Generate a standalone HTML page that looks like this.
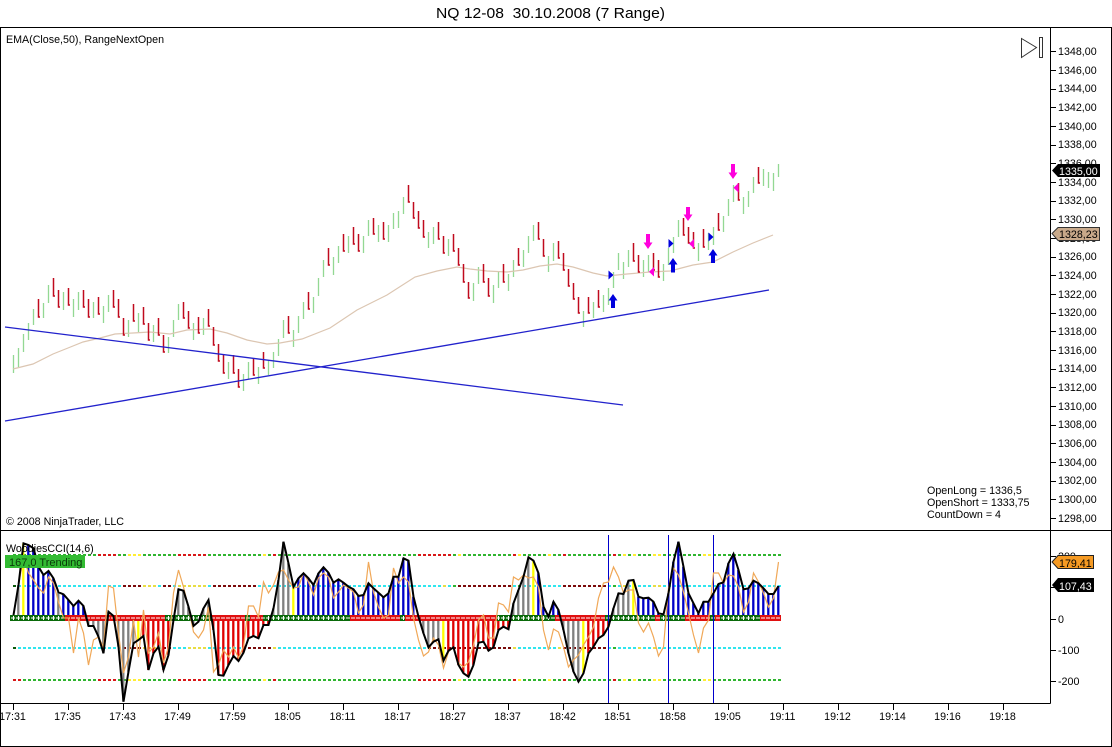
<!DOCTYPE html>
<html>
<head>
<meta charset="utf-8">
<style>
html,body{margin:0;padding:0;background:#fff;width:1112px;height:747px;overflow:hidden}
svg{display:block}
text{font-family:"Liberation Sans",Arial,sans-serif;font-size:10.7px;fill:#000}
</style>
</head>
<body>
<svg width="1112" height="747" viewBox="0 0 1112 747" xmlns="http://www.w3.org/2000/svg">
<rect width="1112" height="747" fill="#fff"/>

<!-- title -->
<text x="436" y="18" textLength="229" lengthAdjust="spacingAndGlyphs" style="font-size:15px;white-space:pre" xml:space="preserve">NQ 12-08  30.10.2008 (7 Range)</text>

<!-- price bars green -->
<path fill="none" stroke="#93d893" stroke-width="1.300" d="M13.500 355V373M18.500 348V367M23.500 334V352M28.500 323V340M33.500 309V325M43.500 303V318M48.500 285V303M63.500 292V310M73.500 299V317M78.500 292V310M93.500 302V318M103.500 306V323M108.500 295V312M128.500 320V337M138.500 313V332M153.500 325V342M168.500 337V353M173.500 320V337M178.500 304V320M193.500 323V340M203.500 318V335M228.500 362V379M243.500 374V391M248.500 362V379M258.500 367V384M268.500 360V375M273.500 352V368M278.500 339V356M283.500 320V338M293.500 330V347M298.500 316V333M303.500 302V319M313.500 297V313M318.500 278V296M323.500 260V277M333.500 257V275M338.500 246V263M348.500 236V253M363.500 236V253M368.500 220V236M378.500 225V242M388.500 225V242M393.500 213V229M398.500 211V228M403.500 197V214M428.500 232V248M433.500 227V244M448.500 239V256M473.500 283V301M478.500 267V284M493.500 285V303M498.500 272V288M508.500 274V291M513.500 260V277M523.500 250V267M528.500 236V253M533.500 225V241M548.500 256V272M553.500 243V261M583.500 311V327M593.500 302V318M603.500 295V312M608.500 288V305M613.500 272V288M618.500 253V270M623.500 262V279M628.500 250V267M643.500 260V277M648.500 255V272M663.500 264V281M668.500 248V265M673.500 237V253M678.500 220V237M698.500 243V261M708.500 233V250M713.500 227V245M723.500 216V232M728.500 199V216M733.500 185V202M743.500 197V214M748.500 191V207M753.500 177V193M763.500 169V186M768.500 172V188M773.500 173V191M778.500 164V177"/>

<!-- EMA -->
<polyline fill="none" stroke="#dcc6b2" stroke-width="1.200" points="13,369 33,364 53,354 68,348 83,342 100,338 115,334 133,333 150,332 170,334 187,330 210,329 227,333 247,340 267,344 280,343 302,339 330,328 357,310 387,295 415,277 437,271 457,267 470,269 487,271 507,272 523,270 540,266 557,264 573,267 593,273 607,276 627,274 650,272 670,271 693,265 713,262 733,252 753,243 773,235"/>

<!-- price bars red -->
<path fill="none" stroke="#c00a1e" stroke-width="1.500" d="M38.500 299V317h1.500M53.500 278V296h1.500M58.500 290V307h1.500M68.500 288V305h1.500M83.500 290V307h1.500M88.500 299V317h1.500M98.500 297V314h1.500M113.500 290V307h1.500M118.500 299V317h1.500M123.500 318V335h1.500M133.500 304V321h1.500M143.500 307V324h1.500M148.500 323V340h1.500M158.500 318V335h1.500M163.500 335V352h1.500M183.500 302V318h1.500M188.500 311V328h1.500M198.500 317V333h1.500M208.500 309V326h1.500M213.500 327V345h1.500M218.500 344V361h1.500M223.500 354V373h1.500M233.500 355V373h1.500M238.500 369V387h1.500M253.500 358V375h1.500M263.500 352V368h1.500M288.500 316V333h1.500M308.500 292V309h1.500M328.500 248V265h1.500M343.500 234V251h1.500M353.500 227V244h1.500M358.500 234V251h1.500M373.500 218V234h1.500M383.500 222V239h1.500M408.500 185V202h1.500M413.500 202V218h1.500M418.500 211V228h1.500M423.500 220V237h1.500M438.500 222V239h1.500M443.500 236V253h1.500M453.500 234V251h1.500M458.500 248V265h1.500M463.500 264V282h1.500M468.500 282V298h1.500M483.500 264V282h1.500M488.500 278V296h1.500M503.500 264V282h1.500M518.500 248V265h1.500M538.500 222V239h1.500M543.500 239V256h1.500M558.500 241V258h1.500M563.500 253V270h1.500M568.500 269V286h1.500M573.500 283V299h1.500M578.500 297V313h1.500M588.500 297V313h1.500M598.500 290V307h1.500M633.500 243V261h1.500M638.500 255V272h1.500M653.500 253V270h1.500M658.500 260V277h1.500M683.500 218V235h1.500M688.500 227V243h1.500M693.500 232V248h1.500M703.500 229V247h1.500M718.500 213V230h1.500M738.500 183V200h1.500M758.500 167V183h1.500"/>

<!-- trend lines -->
<path fill="none" stroke="#2222cc" stroke-width="1.300" d="M5 327L623 405M5 421L769 290"/>

<!-- markers -->
<g fill="#0000dd">
<path d="M613 294l4.500 6.500h-2.500v7.500h-4v-7.500h-2.500z"/>
<path d="M673 258l4.500 6.500h-2.500v8h-4v-8h-2.500z"/>
<path d="M713 249l4.500 6.500h-2.500v7.500h-4v-7.500h-2.500z"/>
<path d="M608.500 270.500l5 4.500-5 4.500z"/>
<path d="M668.500 239l5 4.500-5 4.500z"/>
<path d="M708.500 232.500l5 4.500-5 4.500z"/>
</g>
<g fill="#ff00dd">
<path d="M648 249l-4.500-6.500h2.500v-8.500h4v8.500h2.500z"/>
<path d="M688 221l-4.500-6.500h2.500v-7.500h4v7.500h2.500z"/>
<path d="M733 179l-4.500-6.500h2.500v-8.500h4v8.500h2.500z"/>
<path d="M654 267v9.500l-5-4.750z"/>
<path d="M694 239v9.500l-5-4.750z"/>
<path d="M738.500 183v9.500l-5-4.750z"/>
</g>

<!-- level rows -->
<g fill="none" stroke-width="2" stroke-dasharray="3 2">
<path stroke="#2fb52f" d="M13 555H781M13 680H781"/>
<path stroke="#30e6ee" d="M13 586H781M13 648H781"/>
<path stroke="#d81818" d="M98 555H118M178 555H208M273 555H278M418 555H453M513 555H518M563 555H568M613 555H618M13 680H23M98 680H118M178 680H208M273 680H278M418 680H453M513 680H518M563 680H568M613 680H618"/>
<path stroke="#ffee33" d="M128 555H143M263 555H268M458 555H463M518 555H523M548 555H553M623 555H628M633 555H638M653 555H663M703 555H713M128 680H143M263 680H268M458 680H463M518 680H523M548 680H553M623 680H628M633 680H638M653 680H663M703 680H713"/>
<path stroke="#7a0a0a" d="M123 586H143M163 586H173M213 586H258M458 586H513M563 586H608M123 648H143M163 648H173M248 648H273M428 648H513M563 648H608"/>
<path stroke="#e8dd44" d="M143 586H158M178 586H208M443 586H448M623 586H628M653 586H663M143 648H158M188 648H208M273 648H278M513 648H518M558 648H563M638 648H643M653 648H658"/>
<path stroke="#2fb52f" d="M453 586H458M613 586H618M518 586H523M613 648H618"/>
<path stroke="#0a5a0a" d="M13 586H18M13 648H18"/>
</g>

<!-- histogram -->
<g fill="none" stroke-width="2.300" transform="translate(-0.200 0)">
<path stroke="#0000c8" d="M28.500 618V545M33.500 618V548.300M38.500 618V566.700M43.500 618V575M48.500 618V571M53.500 618V578.300M63.500 618V594.300M68.500 618V600M73.500 618V606M78.500 618V600.700M83.500 618V606M298.500 618V578.300M303.500 618V573.300M308.500 618V578.300M313.500 618V585M318.500 618V573.300M323.500 618V567.300M328.500 618V572.700M333.500 618V582.700M338.500 618V579.300M343.500 618V582.700M348.500 618V586.700M353.500 618V589.300M358.500 618V596M363.500 618V595M368.500 618V583.300M373.500 618V588.300M378.500 618V592.700M383.500 618V597.300M388.500 618V593.300M393.500 618V576.700M398.500 618V576.700M403.500 618V558.300M408.500 618V560.700M413.500 618V596.700M538.500 618V573.300M543.500 618V606.700M548.500 618V616.700M553.500 618V601.700M558.500 618V610M638.500 618V596.700M643.500 618V598.300M648.500 618V597.700M653.500 618V601.700M658.500 618V613.300M663.500 618V614.300M668.500 618V593.300M673.500 618V561.700M678.500 618V541.700M683.500 618V566.700M688.500 618V593.300M693.500 618V603.300M698.500 618V613.300M703.500 618V601.700M708.500 618V601.700M713.500 618V593.300M718.500 618V584M723.500 618V582.300M728.500 618V563.300M733.500 618V554M738.500 618V570M743.500 618V589.300M748.500 618V588.300M753.500 618V580.700M758.500 618V583.300M763.500 618V588.300M768.500 618V594M773.500 618V594M778.500 618V586"/>
<path stroke="#808080" d="M18.500 618V585M58.500 618V592.300M88.500 618V626M93.500 618V626M98.500 618V636.700M103.500 618V653.300M108.500 618V611.700M113.500 618V616M118.500 618V646.700M123.500 618V701.700M128.500 618V671.700M133.500 618V643.300M173.500 618V620M178.500 618V589.300M183.500 618V590.700M188.500 618V606.700M193.500 618V626M198.500 618V621.700M203.500 618V608.300M208.500 618V600M273.500 618V608.300M278.500 618V580M283.500 618V541.700M288.500 618V563.300M418.500 618V616.700M423.500 618V633.300M428.500 618V647.300M433.500 618V641.700M438.500 618V639.300M513.500 618V603.300M518.500 618V590M523.500 618V576.700M528.500 618V557.300M563.500 618V630M568.500 618V653.300M573.500 618V671.700M578.500 618V681.700M613.500 618V608.300M618.500 618V593.300M623.500 618V594M628.500 618V580.700"/>
<path stroke="#ffff00" d="M23.500 618V543.300M138.500 618V640M293.500 618V586.700M443.500 618V660.700M533.500 618V560.700M583.500 618V673.300M633.500 618V580"/>
<path stroke="#e00000" d="M143.500 618V636M148.500 618V670M153.500 618V653.300M158.500 618V646.700M163.500 618V670M168.500 618V655M213.500 618V630M218.500 618V675M223.500 618V675.700M228.500 618V665M233.500 618V656M238.500 618V661M243.500 618V652.700M248.500 618V638.300M253.500 618V636M258.500 618V638.300M263.500 618V625M268.500 618V625M448.500 618V650.700M453.500 618V647.300M458.500 618V665M463.500 618V673.300M468.500 618V676.700M473.500 618V665M478.500 618V642.700M483.500 618V641.700M488.500 618V650.700M493.500 618V647.300M498.500 618V630M503.500 618V626.700M508.500 618V629.300M588.500 618V653.300M593.500 618V646.700M598.500 618V638.300M603.500 618V635M608.500 618V626.700"/>
</g>

<!-- zero row -->
<g fill="none" stroke-width="6">
<path stroke="#0a6a0a" d="M10 618H65M165 618H212M245 618H250M263 618H350M400 618H405M497 618H555M605 618H655M660 618H685M710 618H715M720 618H760"/>
<path stroke="#e01010" d="M65 618H165M212 618H245M250 618H263M350 618H400M405 618H497M555 618H605M655 618H660M685 618H710M715 618H720M760 618H781"/>
</g>
<path fill="none" stroke="#fff" stroke-width="1" stroke-dasharray="4 1" d="M11 618H780"/>
<path fill="none" stroke="#fff" stroke-width="4" stroke-dasharray="1 4" d="M13 618H63M168 618H208M268 618H348M403 618H404M498 618H553M608 618H653M663 618H683M723 618H758"/>

<!-- vertical lines -->
<path fill="none" stroke="#0000cc" stroke-width="1" d="M608.500 535V703M668.500 535V703M713.500 535V703"/>

<!-- orange -->
<polyline fill="none" stroke="#f0a858" stroke-width="1.200" points="13.500,615 18.500,585 23.500,558 28.500,573 33.500,580 38.500,588 43.500,593 48.500,577 53.500,583 58.500,602 63.500,618 68.500,618 73.500,653 78.500,618 83.500,633 88.500,665 93.500,640 98.500,637 103.500,647 108.500,586 113.500,588 118.500,633 123.500,673 128.500,657 133.500,620 138.500,657 143.500,610 148.500,653 153.500,647 158.500,633 163.500,663 168.500,647 173.500,593 178.500,570 183.500,587 188.500,607 193.500,632 198.500,638 203.500,630 208.500,607 213.500,672 218.500,665 223.500,650 228.500,657 233.500,647 238.500,658 243.500,647 248.500,606 253.500,606 258.500,617 263.500,582 268.500,593 273.500,585 278.500,572 283.500,570 288.500,580 293.500,588 298.500,587 303.500,573 308.500,582 313.500,595 318.500,578 323.500,573 328.500,577 333.500,598 338.500,592 343.500,585 348.500,588 353.500,592 358.500,613 363.500,605 368.500,562 373.500,592 378.500,607 383.500,618 388.500,615 393.500,568 398.500,583 403.500,577 408.500,582 413.500,618 418.500,640 423.500,656 428.500,652 433.500,638 438.500,645 443.500,668 448.500,652 453.500,647 458.500,663 463.500,667 468.500,662 473.500,645 478.500,620 483.500,615 488.500,638 493.500,638 498.500,603 503.500,605 508.500,612 513.500,577 518.500,580 523.500,575 528.500,578 533.500,577 538.500,587 543.500,630 548.500,650 553.500,629 558.500,632 563.500,647 568.500,667 573.500,660 578.500,655 583.500,645 588.500,637 593.500,627 598.500,598 603.500,583 608.500,582 613.500,567 618.500,577 623.500,593 628.500,590 633.500,590 638.500,623 643.500,632 648.500,623 653.500,637 658.500,656 663.500,647 668.500,588 673.500,568 678.500,575 683.500,592 688.500,613 693.500,635 698.500,653 703.500,628 708.500,620 713.500,573 718.500,573 723.500,583 728.500,575 733.500,576 738.500,587 743.500,612 748.500,602 753.500,573 758.500,582 763.500,593 768.500,607 773.500,598 778.500,562"/>

<!-- black CCI -->
<polyline fill="none" stroke="#000" stroke-width="2" stroke-linejoin="miter" points="13.500,615 18.500,585 23.500,543.300 28.500,545 33.500,548.300 38.500,566.700 43.500,575 48.500,571 53.500,578.300 58.500,592.300 63.500,594.300 68.500,600 73.500,606 78.500,600.700 83.500,606 88.500,626 93.500,626 98.500,636.700 103.500,653.300 108.500,611.700 113.500,616 118.500,646.700 123.500,701.700 128.500,671.700 133.500,643.300 138.500,640 143.500,636 148.500,670 153.500,653.300 158.500,646.700 163.500,670 168.500,655 173.500,620 178.500,589.300 183.500,590.700 188.500,606.700 193.500,626 198.500,621.700 203.500,608.300 208.500,600 213.500,630 218.500,675 223.500,675.700 228.500,665 233.500,656 238.500,661 243.500,652.700 248.500,638.300 253.500,636 258.500,638.300 263.500,625 268.500,625 273.500,608.300 278.500,580 283.500,541.700 288.500,563.300 293.500,586.700 298.500,578.300 303.500,573.300 308.500,578.300 313.500,585 318.500,573.300 323.500,567.300 328.500,572.700 333.500,582.700 338.500,579.300 343.500,582.700 348.500,586.700 353.500,589.300 358.500,596 363.500,595 368.500,583.300 373.500,588.300 378.500,592.700 383.500,597.300 388.500,593.300 393.500,576.700 398.500,576.700 403.500,558.300 408.500,560.700 413.500,596.700 418.500,616.700 423.500,633.300 428.500,647.300 433.500,641.700 438.500,639.300 443.500,660.700 448.500,650.700 453.500,647.300 458.500,665 463.500,673.300 468.500,676.700 473.500,665 478.500,642.700 483.500,641.700 488.500,650.700 493.500,647.300 498.500,630 503.500,626.700 508.500,629.300 513.500,603.300 518.500,590 523.500,576.700 528.500,557.300 533.500,560.700 538.500,573.300 543.500,606.700 548.500,616.700 553.500,601.700 558.500,610 563.500,630 568.500,653.300 573.500,671.700 578.500,681.700 583.500,673.300 588.500,653.300 593.500,646.700 598.500,638.300 603.500,635 608.500,626.700 613.500,608.300 618.500,593.300 623.500,594 628.500,580.700 633.500,580 638.500,596.700 643.500,598.300 648.500,597.700 653.500,601.700 658.500,613.300 663.500,614.300 668.500,593.300 673.500,561.700 678.500,541.700 683.500,566.700 688.500,593.300 693.500,603.300 698.500,613.300 703.500,601.700 708.500,601.700 713.500,593.300 718.500,584 723.500,582.300 728.500,563.300 733.500,554 738.500,570 743.500,589.300 748.500,588.300 753.500,580.700 758.500,583.300 763.500,588.300 768.500,594 773.500,594 778.500,586"/>

<!-- y axis ticks -->
<path fill="none" stroke="#000" stroke-width="1" d="M1050 51.500h6M1050 70.500h6M1050 89.500h6M1050 107.500h6M1050 126.500h6M1050 145.500h6M1050 163.500h6M1050 182.500h6M1050 201.500h6M1050 219.500h6M1050 238.500h6M1050 257.500h6M1050 275.500h6M1050 294.500h6M1050 313.500h6M1050 331.500h6M1050 350.500h6M1050 369.500h6M1050 387.500h6M1050 406.500h6M1050 425.500h6M1050 443.500h6M1050 462.500h6M1050 481.500h6M1050 499.500h6M1050 518.500h6M1050 556.500h6M1050 587.500h6M1050 619.500h6M1050 650.500h6M1050 681.500h6"/>
<!-- x axis ticks -->
<path fill="none" stroke="#000" stroke-width="1" d="M13.500 703v7M68.500 703v7M123.500 703v7M178.500 703v7M233.500 703v7M288.500 703v7M343.500 703v7M398.500 703v7M453.500 703v7M508.500 703v7M563.500 703v7M618.500 703v7M673.500 703v7M728.500 703v7M783.500 703v7M838.500 703v7M893.500 703v7M948.500 703v7M1003.500 703v7"/>

<!-- y labels -->
<g>
<text x="1058" y="55">1348,00</text><text x="1058" y="74">1346,00</text><text x="1058" y="92">1344,00</text><text x="1058" y="111">1342,00</text><text x="1058" y="130">1340,00</text><text x="1058" y="148">1338,00</text><text x="1058" y="167">1336,00</text><text x="1058" y="186">1334,00</text><text x="1058" y="204">1332,00</text><text x="1058" y="223">1330,00</text><text x="1058" y="242">1328,00</text><text x="1058" y="260">1326,00</text><text x="1058" y="279">1324,00</text><text x="1058" y="298">1322,00</text><text x="1058" y="316">1320,00</text><text x="1058" y="335">1318,00</text><text x="1058" y="354">1316,00</text><text x="1058" y="372">1314,00</text><text x="1058" y="391">1312,00</text><text x="1058" y="410">1310,00</text><text x="1058" y="428">1308,00</text><text x="1058" y="447">1306,00</text><text x="1058" y="466">1304,00</text><text x="1058" y="484">1302,00</text><text x="1058" y="503">1300,00</text><text x="1058" y="522">1298,00</text>
<text x="1058" y="560">200</text><text x="1058" y="591">100</text><text x="1058" y="623">0</text><text x="1058" y="654">-100</text><text x="1058" y="685">-200</text>
</g>

<!-- value tags -->
<path fill="#000" d="M1052 170.500L1058 164H1100V177H1058Z"/>
<text x="1059" y="175" style="fill:#fff">1335,00</text>
<path fill="#c8a98a" stroke="#333" stroke-width="1" d="M1052 233.500L1058 227.500H1099.500V240.500H1058Z"/>
<text x="1059" y="238">1328,23</text>
<path fill="#f59a23" stroke="#222" stroke-width="1" d="M1052 562L1058 555.500H1093.500V568.500H1058Z"/>
<text x="1059" y="567">179,41</text>
<path fill="#000" d="M1052 585L1058 578H1094V592H1058Z"/>
<text x="1059" y="590" style="fill:#fff">107,43</text>

<!-- play icon -->
<path fill="#fff" stroke="#333" stroke-width="1" d="M1021.500 38.500L1036.500 47.500L1021.500 57.500ZM1039.500 37.500H1042.500V57.500H1039.500Z"/>

<!-- labels -->
<text x="6" y="43">EMA(Close,50), RangeNextOpen</text>
<text x="6" y="525">© 2008 NinjaTrader, LLC</text>
<text x="927" y="494">OpenLong = 1336,5</text>
<text x="927" y="506">OpenShort = 1333,75</text>
<text x="927" y="518">CountDown = 4</text>
<text x="6" y="552">WoodiesCCI(14,6)</text>
<rect x="5" y="555" width="80" height="13" fill="#33bb33"/>
<text x="9" y="566" style="font-size:11px;fill:#0a3a0a">167,0 Trending</text>

<!-- time labels -->
<g text-anchor="middle">
<text x="12.500" y="720">17:31</text><text x="67.500" y="720">17:35</text><text x="122.500" y="720">17:43</text><text x="177.500" y="720">17:49</text><text x="232.500" y="720">17:59</text><text x="287.500" y="720">18:05</text><text x="342.500" y="720">18:11</text><text x="397.500" y="720">18:17</text><text x="452.500" y="720">18:27</text><text x="507.500" y="720">18:37</text><text x="562.500" y="720">18:42</text><text x="617.500" y="720">18:51</text><text x="672.500" y="720">18:58</text><text x="727.500" y="720">19:05</text><text x="782.500" y="720">19:11</text><text x="837.500" y="720">19:12</text><text x="892.500" y="720">19:14</text><text x="947.500" y="720">19:16</text><text x="1002.500" y="720">19:18</text>
</g>

<!-- frame -->
<path fill="none" stroke="#000" stroke-width="1" d="M0.500 27.500H1111.500V746.500H0.500ZM0 530.500H1111M1 703.500H1050.500M1050.500 27V703.500"/>
</svg>
</body>
</html>
